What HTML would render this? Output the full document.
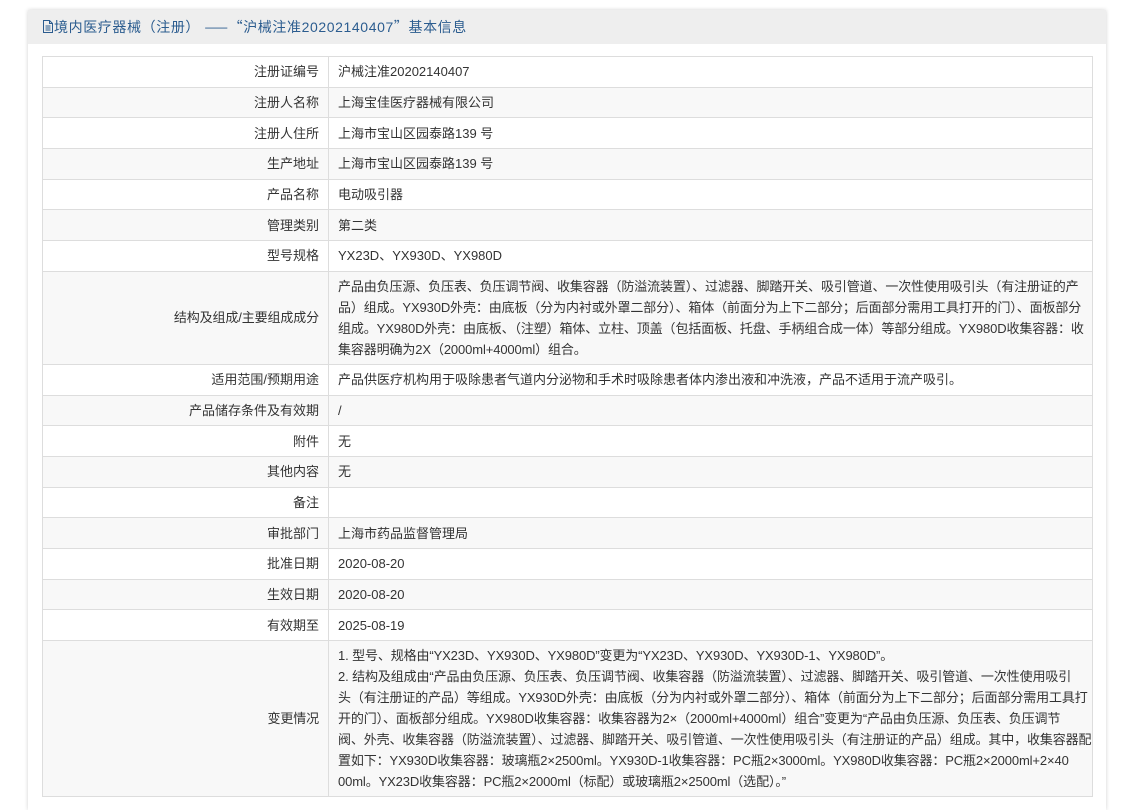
<!DOCTYPE html>
<html><head><meta charset="utf-8"><style>
body{margin:0;background:#fff;font-family:"Liberation Sans","Noto Sans CJK SC",sans-serif;font-size:13px;color:#333;}
.panel{position:absolute;left:28px;top:10px;width:1078px;height:800px;background:#fff;box-shadow:0 0 4px rgba(0,0,0,.18);}
.hd{height:34px;background:#eeeeee;color:#2b5c8f;font-size:14px;letter-spacing:0.6px;line-height:34px;padding-left:14px;white-space:nowrap;}
.c{font-family:"Noto Sans CJK SC",sans-serif;}
table{position:absolute;left:14px;top:46px;width:1051px;border-collapse:collapse;table-layout:fixed;}
td{border:1px solid #ddd;height:29.7px;padding:0 9px;line-height:21px;white-space:nowrap;overflow:hidden;}
td.l{text-align:right;}
tr:nth-child(even) td{background:#f8f8f8;}
.m td{padding:4px 9px;letter-spacing:-0.12px;}
</style></head><body>
<div class="panel">
<div class="hd"><svg width="12" height="13" viewBox="0 0 12 13" style="vertical-align:-1px"><path d="M1.5 .5h6l3 3v9h-9z M7.5 .5v3h3 M3.5 6h5 M3.5 8h5 M3.5 10h5" fill="none" stroke="#2b5c8f"/></svg>境内医疗器械<span class="c">（</span>注册<span class="c">）</span> <span class="c">——“</span>沪械注准20202140407<span class="c">”</span>基本信息</div>
<table>
<colgroup><col style="width:286px"><col></colgroup>
<tr><td class="l">注册证编号</td><td>沪械注准20202140407</td></tr>
<tr><td class="l">注册人名称</td><td>上海宝佳医疗器械有限公司</td></tr>
<tr><td class="l">注册人住所</td><td>上海市宝山区园泰路139 号</td></tr>
<tr><td class="l">生产地址</td><td>上海市宝山区园泰路139 号</td></tr>
<tr><td class="l">产品名称</td><td>电动吸引器</td></tr>
<tr><td class="l">管理类别</td><td>第二类</td></tr>
<tr><td class="l">型号规格</td><td>YX23D、YX930D、YX980D</td></tr>
<tr class="m"><td class="l">结构及组成/主要组成成分</td><td>产品由负压源、负压表、负压调节阀、收集容器（防溢流装置）、过滤器、脚踏开关、吸引管道、一次性使用吸引头（有注册证的产<br>品）组成。YX930D外壳：由底板（分为内衬或外罩二部分）、箱体（前面分为上下二部分；后面部分需用工具打开的门）、面板部分<br>组成。YX980D外壳：由底板、（注塑）箱体、立柱、顶盖（包括面板、托盘、手柄组合成一体）等部分组成。YX980D收集容器：收<br>集容器明确为2X（2000ml+4000ml）组合。</td></tr>
<tr><td class="l">适用范围/预期用途</td><td>产品供医疗机构用于吸除患者气道内分泌物和手术时吸除患者体内渗出液和冲洗液，产品不适用于流产吸引。</td></tr>
<tr><td class="l">产品储存条件及有效期</td><td>/</td></tr>
<tr><td class="l">附件</td><td>无</td></tr>
<tr><td class="l">其他内容</td><td>无</td></tr>
<tr><td class="l">备注</td><td></td></tr>
<tr><td class="l">审批部门</td><td>上海市药品监督管理局</td></tr>
<tr><td class="l">批准日期</td><td>2020-08-20</td></tr>
<tr><td class="l">生效日期</td><td>2020-08-20</td></tr>
<tr><td class="l">有效期至</td><td>2025-08-19</td></tr>
<tr class="m"><td class="l">变更情况</td><td>1. 型号、规格由“YX23D、YX930D、YX980D”变更为“YX23D、YX930D、YX930D-1、YX980D”。<br>2. 结构及组成由“产品由负压源、负压表、负压调节阀、收集容器（防溢流装置）、过滤器、脚踏开关、吸引管道、一次性使用吸引<br>头（有注册证的产品）等组成。YX930D外壳：由底板（分为内衬或外罩二部分）、箱体（前面分为上下二部分；后面部分需用工具打<br>开的门）、面板部分组成。YX980D收集容器：收集容器为2×（2000ml+4000ml）组合”变更为“产品由负压源、负压表、负压调节<br>阀、外壳、收集容器（防溢流装置）、过滤器、脚踏开关、吸引管道、一次性使用吸引头（有注册证的产品）组成。其中，收集容器配<br>置如下：YX930D收集容器：玻璃瓶2×2500ml。YX930D-1收集容器：PC瓶2×3000ml。YX980D收集容器：PC瓶2×2000ml+2×40<br>00ml。YX23D收集容器：PC瓶2×2000ml（标配）或玻璃瓶2×2500ml（选配）。”</td></tr>
</table>
</div>
</body></html>
